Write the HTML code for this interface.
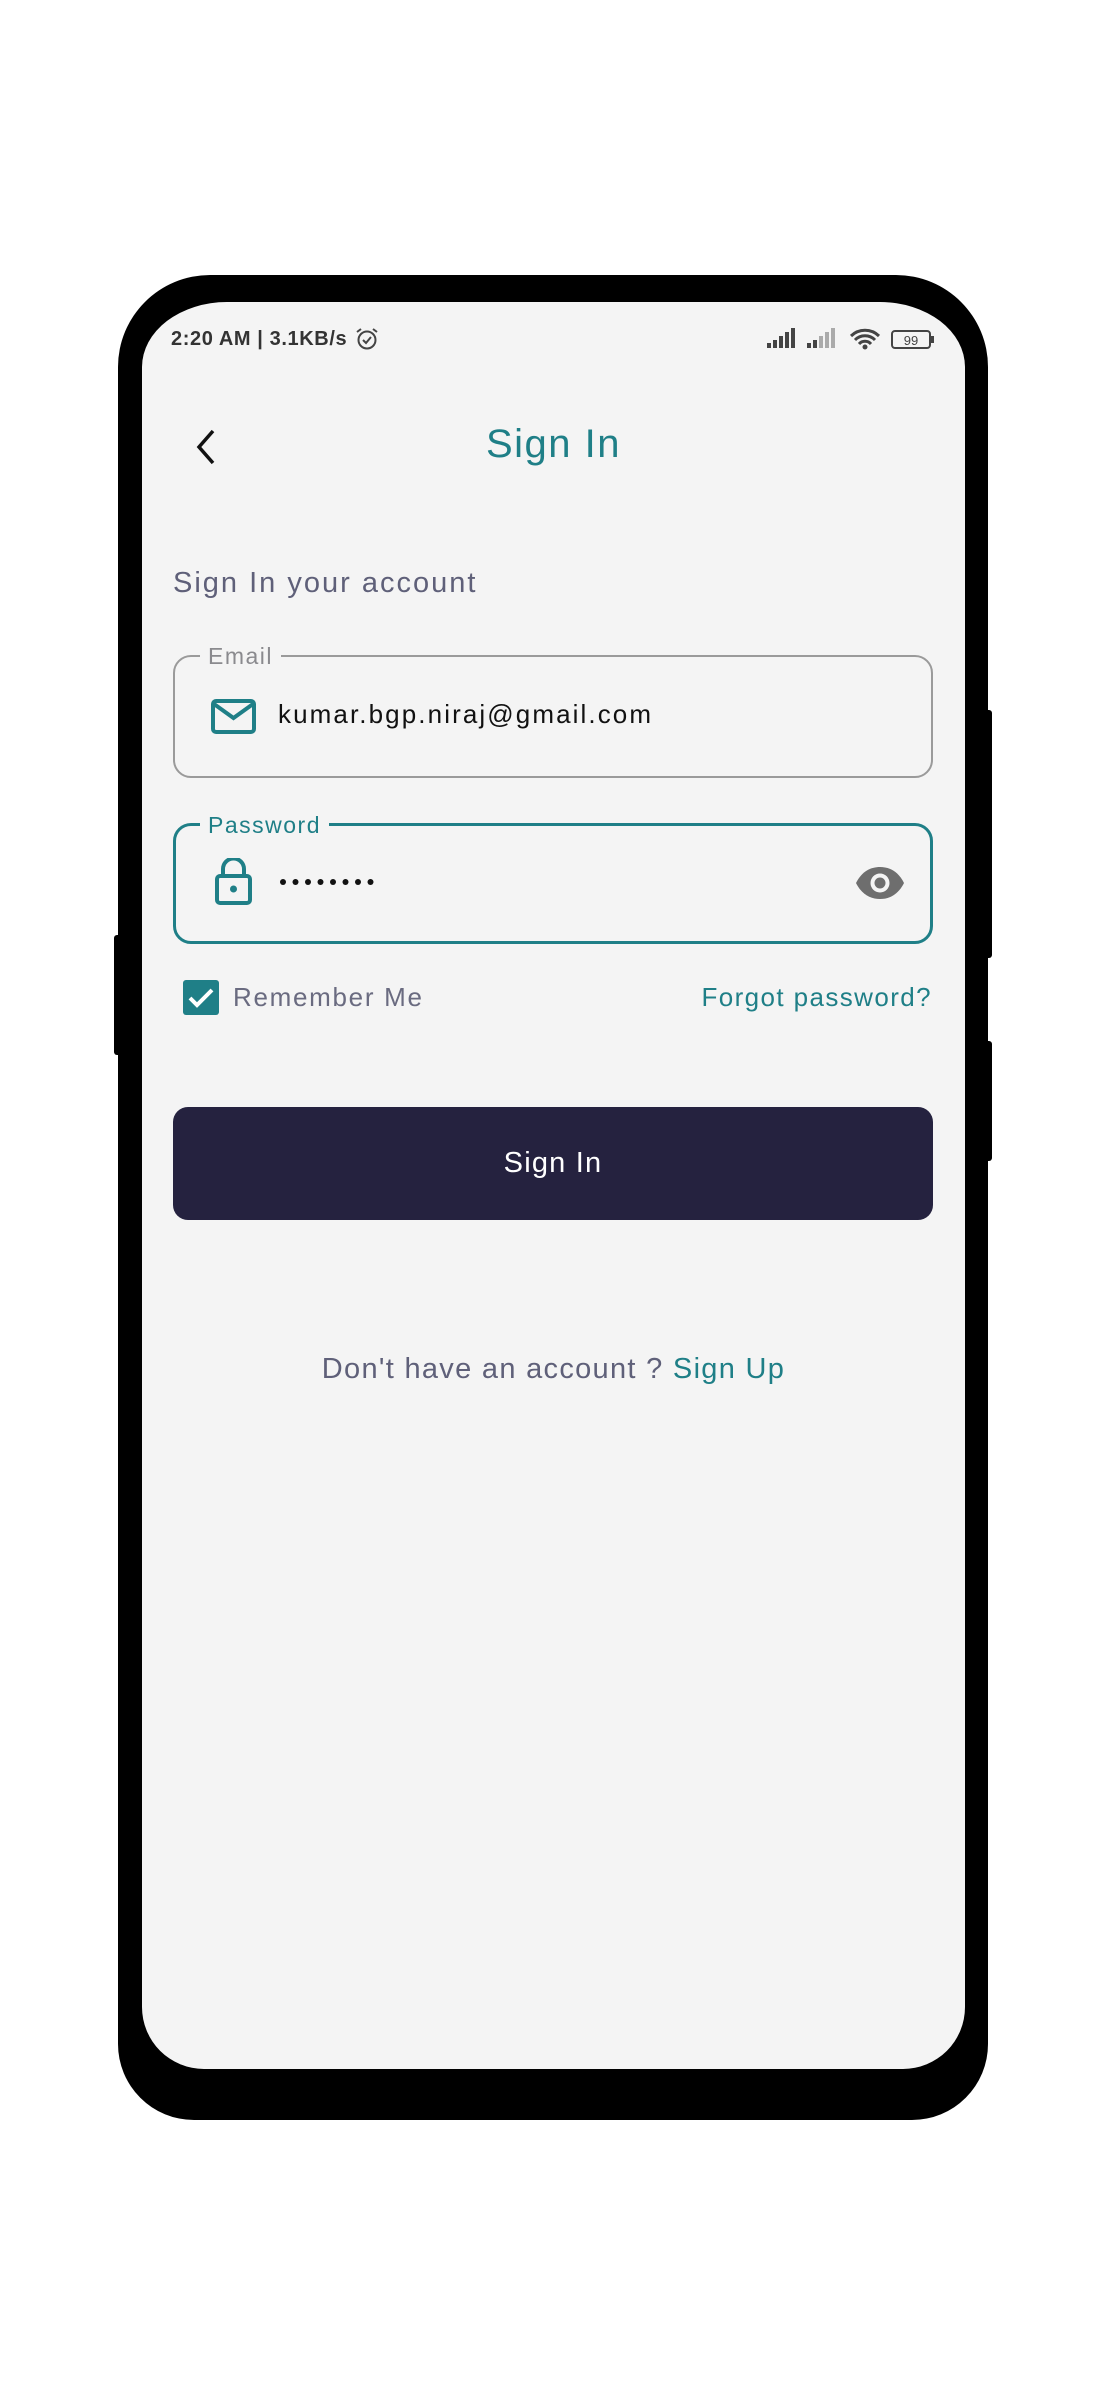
<!DOCTYPE html>
<html><head><meta charset="utf-8"><style>
*{margin:0;padding:0;box-sizing:border-box}
body{width:1107px;height:2396px;background:#fff;position:relative;font-family:"Liberation Sans",sans-serif;overflow:hidden}
.phone{position:absolute;left:118px;top:275px;width:870px;height:1845px;background:#000;border-radius:92px 92px 76px 76px}
.btn{position:absolute;background:#000;border-radius:3px}
.screen{position:absolute;left:142px;top:302px;width:823px;height:1767px;background:#f4f4f4;border-radius:85px 85px 62px 62px/65px 65px 62px 62px;overflow:hidden}
.abs{position:absolute;white-space:nowrap}
.teal{color:#1f7f87}
</style></head><body>
<div class="btn" style="left:114px;top:935px;width:8px;height:120px"></div>
<div class="btn" style="left:984px;top:710px;width:8px;height:248px"></div>
<div class="btn" style="left:984px;top:1041px;width:8px;height:120px"></div>
<div class="phone"></div>
<div class="screen"></div>

<div class="abs" style="left:171px;top:328px;font-size:20px;font-weight:bold;color:#333;letter-spacing:0.6px">2:20 AM | 3.1KB/s</div>
<svg class="abs" style="left:354px;top:326px" width="26" height="26" viewBox="0 0 26 26"><circle cx="13" cy="14" r="8.5" fill="none" stroke="#444" stroke-width="2"/><path d="M9 14l3 3 5-6M3 6l4-3M23 6l-4-3" fill="none" stroke="#444" stroke-width="2"/></svg>
<svg class="abs" style="left:766px;top:326px" width="170" height="26" viewBox="0 0 170 26">
<g fill="#444"><rect x="1" y="17" width="4" height="5"/><rect x="7" y="14" width="4" height="8"/><rect x="13" y="10" width="4" height="12"/><rect x="19" y="6" width="4" height="16"/><rect x="25" y="2" width="4" height="20"/></g>
<g fill="#444"><rect x="41" y="17" width="4" height="5"/><rect x="47" y="14" width="4" height="8"/></g><g fill="#aaa"><rect x="53" y="10" width="4" height="12"/><rect x="59" y="6" width="4" height="16"/><rect x="65" y="2" width="4" height="20"/></g>
<path d="M85 10a20 20 0 0 1 28 0M89 14a14 14 0 0 1 20 0M93 18a8 8 0 0 1 12 0" fill="none" stroke="#444" stroke-width="3"/><circle cx="99" cy="21" r="2.5" fill="#444"/>
<rect x="126" y="5" width="38" height="17" rx="3" fill="none" stroke="#444" stroke-width="2"/><rect x="165" y="10" width="3" height="7" fill="#444"/><text x="145" y="19" font-size="13" font-family="Liberation Sans" fill="#444" text-anchor="middle">99</text></svg>

<svg class="abs" style="left:192px;top:428px" width="28" height="38" viewBox="0 0 28 38"><path d="M21 3L7 19l14 16" fill="none" stroke="#111" stroke-width="3.5"/></svg>
<div class="abs teal" style="left:0;width:1107px;text-align:center;top:422px;font-size:40px;letter-spacing:1.5px">Sign In</div>

<div class="abs" style="left:173px;top:567px;font-size:29px;color:#5f6079;letter-spacing:2px">Sign In your account</div>

<div class="abs" style="left:173px;top:655px;width:760px;height:123px;border:2px solid #9a9a9a;border-radius:18px"></div>
<div class="abs" style="left:200px;top:643px;padding:0 8px;background:#f4f4f4;font-size:23px;color:#8a8a8e;letter-spacing:1.5px">Email</div>
<svg class="abs" style="left:210px;top:698px" width="48" height="38" viewBox="0 0 48 38"><rect x="3" y="3" width="41" height="31" rx="3" fill="none" stroke="#1f7f87" stroke-width="4"/><path d="M4 6l19.5 14L43 6" fill="none" stroke="#1f7f87" stroke-width="4"/></svg>
<div class="abs" style="left:278px;top:699px;font-size:26px;color:#111;letter-spacing:2.1px">kumar.bgp.niraj@gmail.com</div>

<div class="abs" style="left:173px;top:823px;width:760px;height:121px;border:3.5px solid #1f7f87;border-radius:18px"></div>
<div class="abs teal" style="left:200px;top:812px;padding:0 8px;background:#f4f4f4;font-size:23px;letter-spacing:1.5px">Password</div>
<svg class="abs" style="left:214px;top:858px" width="40" height="48" viewBox="0 0 40 48"><rect x="3" y="18" width="33" height="27" rx="3" fill="none" stroke="#1f7f87" stroke-width="4"/><path d="M9 18v-7a10.5 10.5 0 0 1 21 0v7" fill="none" stroke="#1f7f87" stroke-width="4"/><circle cx="19.5" cy="31" r="3.5" fill="#1f7f87"/></svg>
<svg class="abs" style="left:278px;top:876px" width="100" height="12" viewBox="0 0 100 12"><g fill="#111"><circle cx="5" cy="6" r="3"/><circle cx="17.5" cy="6" r="3"/><circle cx="30" cy="6" r="3"/><circle cx="42.5" cy="6" r="3"/><circle cx="55" cy="6" r="3"/><circle cx="67.5" cy="6" r="3"/><circle cx="80" cy="6" r="3"/><circle cx="92.5" cy="6" r="3"/></g></svg>
<svg class="abs" style="left:855px;top:866px" width="50" height="34" viewBox="0 0 50 34"><path d="M1 17C7 5 16 1 25 1s18 4 24 16c-6 12-15 16-24 16S7 29 1 17z" fill="#6e6e6e"/><circle cx="25" cy="17" r="9.5" fill="#f4f4f4"/><circle cx="25" cy="17" r="5.5" fill="#6e6e6e"/></svg>

<div class="abs" style="left:183px;top:980px;width:36px;height:35px;background:#1f7f87;border-radius:3px"></div>
<svg class="abs" style="left:183px;top:980px" width="36" height="35" viewBox="0 0 36 35"><path d="M7 18l7 7 15-15" fill="none" stroke="#fff" stroke-width="4"/></svg>
<div class="abs" style="left:233px;top:982px;font-size:26px;color:#6a6b80;letter-spacing:1.7px">Remember Me</div>
<div class="abs teal" style="right:175px;top:982px;font-size:26px;letter-spacing:1.4px">Forgot password?</div>

<div class="abs" style="left:173px;top:1107px;width:760px;height:113px;background:#25223f;border-radius:15px;color:#fff;font-size:29px;text-align:center;line-height:113px;letter-spacing:1.2px">Sign In</div>

<div class="abs" style="left:0;width:1107px;text-align:center;top:1353px;font-size:29px;color:#5f6079;letter-spacing:1.3px">Don't have an account ? <span class="teal">Sign Up</span></div>
</body></html>
